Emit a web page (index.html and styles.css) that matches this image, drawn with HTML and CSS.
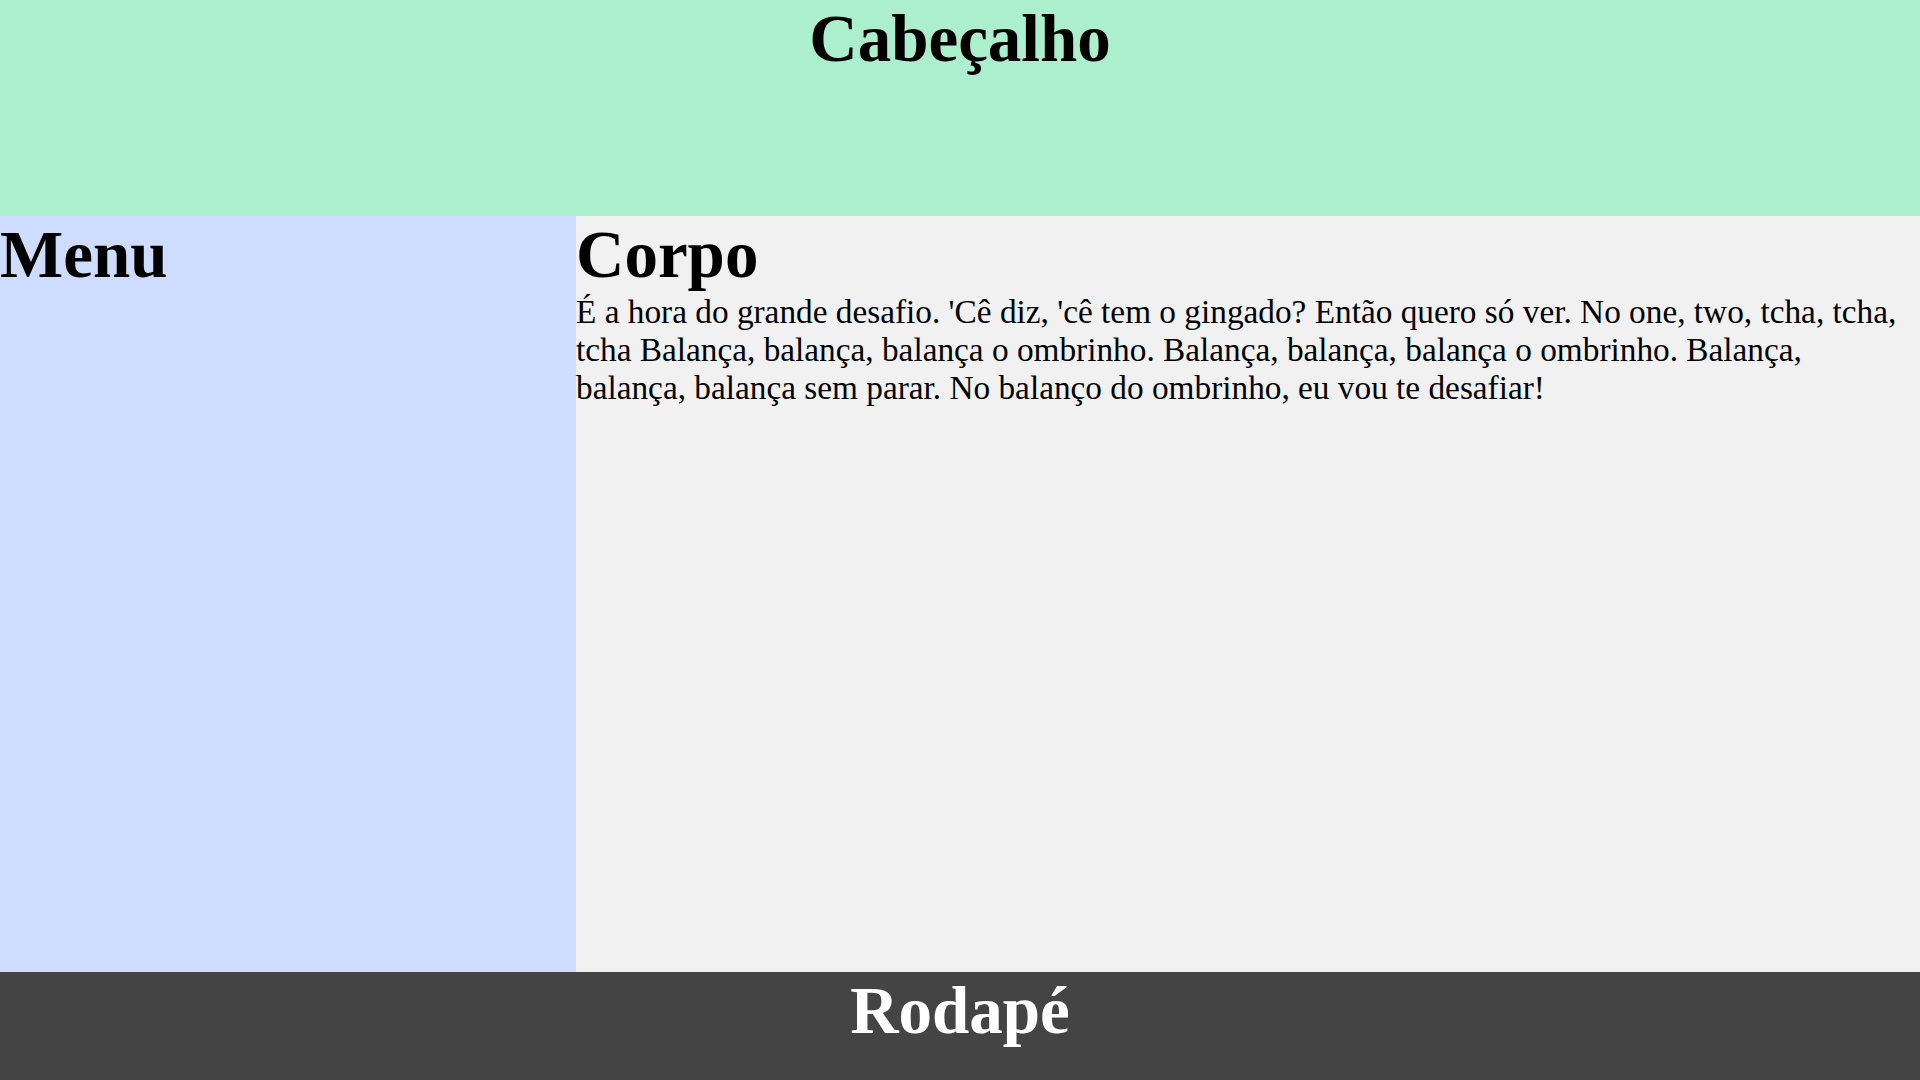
FILE: index.html
```html
<!DOCTYPE html>
<html lang="pt-BR">
<head>
<meta charset="utf-8">
<title>Layout</title>
<link rel="stylesheet" href="styles.css">
</head>
<body>
<div class="page">
  <header class="cabecalho"><h1>Cabeçalho</h1></header>
  <nav class="menu"><h1>Menu</h1></nav>
  <main class="corpo">
    <h1>Corpo</h1>
    <p>É a hora do grande desafio. 'Cê diz, 'cê tem o gingado? Então quero só ver. No one, two, tcha, tcha, tcha Balança, balança, balança o ombrinho. Balança, balança, balança o ombrinho. Balança, balança, balança sem parar. No balanço do ombrinho, eu vou te desafiar!</p>
  </main>
  <footer class="rodape"><h1>Rodapé</h1></footer>
</div>
</body>
</html>
```
FILE: styles.css
```css
html, body {
  margin: 0;
  padding: 0;
}
body {
  font-family: "Liberation Serif", "Times New Roman", serif;
  font-size: 33.3px;
  color: #000;
}
.page {
  display: grid;
  grid-template-columns: 576px 1fr;
  grid-template-rows: 216px 756px 108px;
  height: 1080px;
}
h1 {
  margin: 0;
  font-size: 67px;
  font-weight: bold;
}
p {
  margin: 0;
}
.cabecalho {
  grid-column: 1 / 3;
  background: #abefcc;
  text-align: center;
}
.menu {
  background: #cddcff;
}
.corpo {
  background: #f1f1f1;
}
.rodape {
  grid-column: 1 / 3;
  background: #444444;
  color: #fff;
  text-align: center;
}
```
